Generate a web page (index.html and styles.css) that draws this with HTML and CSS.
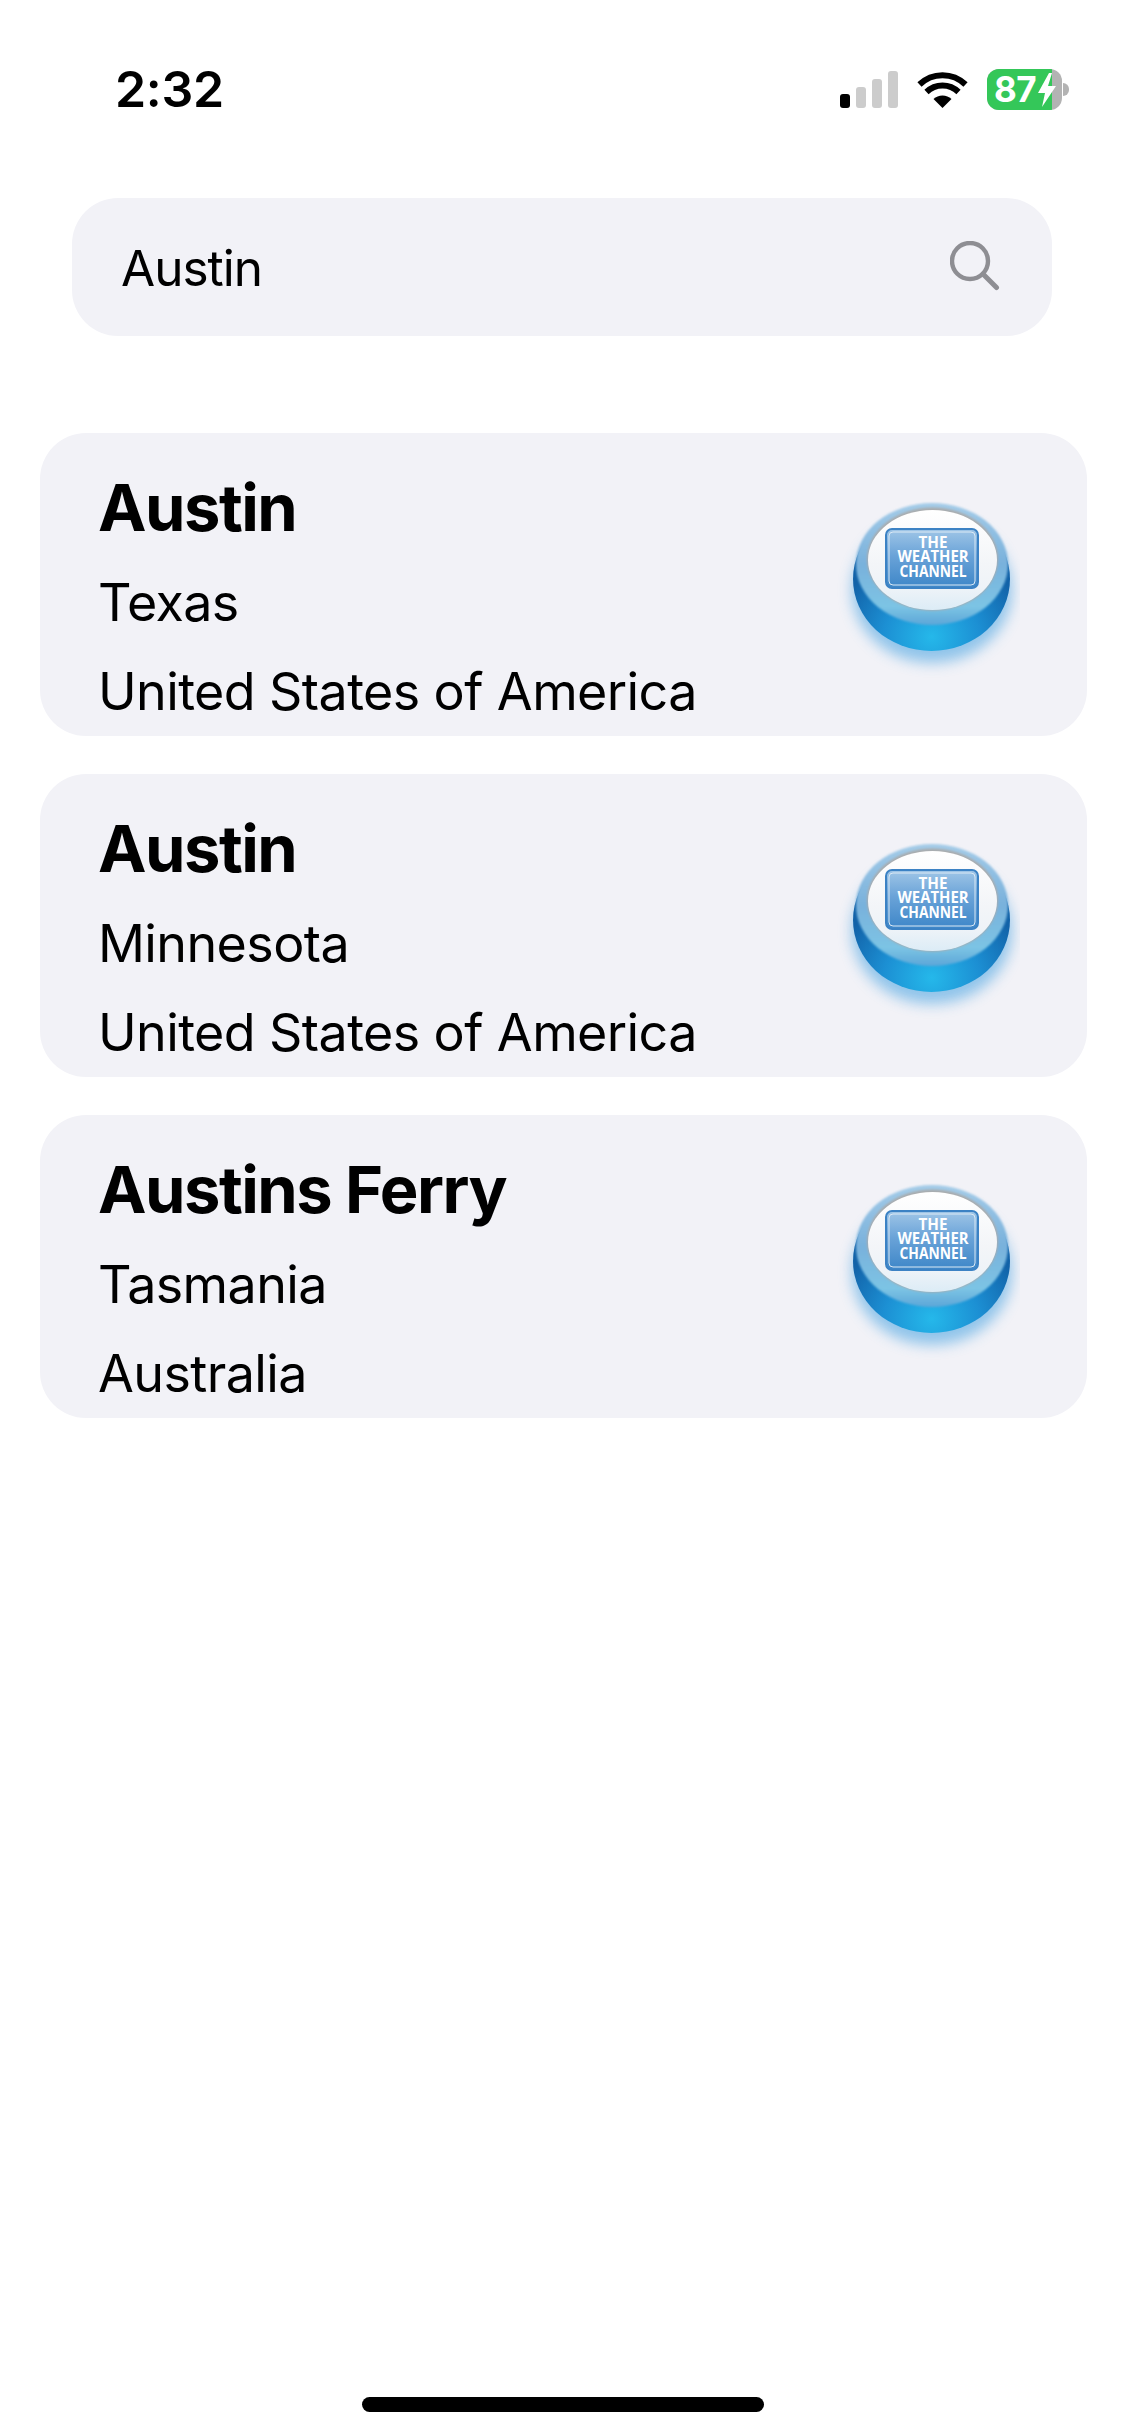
FILE: index.html
```html
<!DOCTYPE html>
<html lang="en">
<head>
<meta charset="utf-8">
<title>Search</title>
<link rel="stylesheet" href="styles.css">
</head>
<body>
<svg class="defs" width="0" height="0" aria-hidden="true">
  <defs>
    <radialGradient id="base" cx=".5" cy=".92" r=".62" fx=".5" fy=".9">
      <stop offset="0" stop-color="#25b8ea"/><stop offset=".5" stop-color="#1c8fd3"/><stop offset="1" stop-color="#1262a8"/>
    </radialGradient>
    <linearGradient id="ring" x1="0" y1="0" x2="0" y2="1">
      <stop offset="0" stop-color="#a5cce8"/><stop offset=".5" stop-color="#79b1dc"/><stop offset=".85" stop-color="#7cc4e4"/><stop offset="1" stop-color="#5ca6d8"/>
    </linearGradient>
    <linearGradient id="glass" x1="0" y1="0" x2="0" y2="1">
      <stop offset="0" stop-color="#ffffff"/><stop offset=".55" stop-color="#f3f5f8"/><stop offset=".78" stop-color="#eef3f8"/><stop offset="1" stop-color="#dcecf6"/>
    </linearGradient>
    <linearGradient id="plate" x1="0" y1="0" x2="0" y2="1">
      <stop offset="0" stop-color="#a0c6e7"/><stop offset=".45" stop-color="#6aa3d8"/><stop offset="1" stop-color="#3d86c8"/>
    </linearGradient>
    <filter id="glow" x="-25%" y="-25%" width="150%" height="150%"><feGaussianBlur stdDeviation="7"/></filter>
    <filter id="soft" x="-5%" y="-5%" width="110%" height="110%"><feGaussianBlur stdDeviation=".8"/></filter>
    <symbol id="twc" viewBox="0 0 200 200">
      <ellipse cx="112" cy="110" rx="80" ry="73" fill="#3f9fe0" opacity=".55" filter="url(#glow)"/>
      <ellipse cx="111.5" cy="99" rx="78.5" ry="72" fill="url(#base)"/>
      <ellipse cx="112" cy="84" rx="76" ry="61" fill="url(#ring)" filter="url(#soft)"/>
      <ellipse cx="112.5" cy="79" rx="65.5" ry="51.5" fill="#a9acae" filter="url(#soft)"/>
      <ellipse cx="112.5" cy="80" rx="64.5" ry="50" fill="url(#glass)"/>
      <rect x="66" y="49" width="92" height="59" rx="6" fill="url(#plate)" stroke="#3c82c4" stroke-width="2"/>
      <rect x="69" y="52" width="86" height="53" rx="4" fill="none" stroke="#dbe9f5" stroke-width="1"/>
      <text class="twc-text" x="113" y="67.5" text-anchor="middle" textLength="29" lengthAdjust="spacingAndGlyphs">THE</text>
      <text class="twc-text" x="113" y="82" text-anchor="middle" textLength="71" lengthAdjust="spacingAndGlyphs">WEATHER</text>
      <text class="twc-text" x="113" y="96.5" text-anchor="middle" textLength="67" lengthAdjust="spacingAndGlyphs">CHANNEL</text>
    </symbol>
  </defs>
</svg>
<main class="screen">
  <header class="status">
    <span class="time">2:32</span>
    <div class="status-icons">
      <div class="signal">
        <span class="bar bar1 on"></span><span class="bar bar2"></span><span class="bar bar3"></span><span class="bar bar4"></span>
      </div>
      <svg class="wifi" width="51" height="37" viewBox="0 0 51 37">
        <path d="M25.5 37 L16.5 28 A13 13 0 0 1 34.5 28 Z" fill="#000"/>
        <path d="M9.5 21 A23 23 0 0 1 41.5 21" fill="none" stroke="#000" stroke-width="6"/>
        <path d="M2.5 13.5 A33 33 0 0 1 48.5 13.5" fill="none" stroke="#000" stroke-width="6"/>
      </svg>
      <div class="battery">
        <div class="battery-body">
          <div class="battery-fill"></div>
          <span class="battery-num">87</span>
          <svg class="bolt" width="20" height="34" viewBox="0 0 20 34"><path d="M12 0 L1 20 H8 L5 34 L19 13 H11 L15 0 Z" fill="#fff"/></svg>
        </div>
        <span class="battery-nub"></span>
      </div>
    </div>
  </header>

  <div class="search">
    <span class="search-text">Austin</span>
    <svg class="search-icon" width="50" height="50" viewBox="0 0 50 50">
      <circle cx="20" cy="20" r="18" fill="none" stroke="#8e8e93" stroke-width="4.4"/>
      <path d="M33 33 L46.5 46.5" stroke="#8e8e93" stroke-width="5" stroke-linecap="round"/>
    </svg>
  </div>

  <section class="results">
    <article class="card">
      <div class="card-text">
        <h2 class="city">Austin</h2>
        <p class="line">Texas</p>
        <p class="line">United States of America</p>
      </div>
      <svg class="logo" width="200" height="200"><use href="#twc"/></svg>
    </article>
    <article class="card">
      <div class="card-text">
        <h2 class="city">Austin</h2>
        <p class="line">Minnesota</p>
        <p class="line">United States of America</p>
      </div>
      <svg class="logo" width="200" height="200"><use href="#twc"/></svg>
    </article>
    <article class="card">
      <div class="card-text">
        <h2 class="city">Austins Ferry</h2>
        <p class="line">Tasmania</p>
        <p class="line">Australia</p>
      </div>
      <svg class="logo" width="200" height="200"><use href="#twc"/></svg>
    </article>
  </section>

  <div class="home-bar"></div>
</main>
</body>
</html>
```
FILE: styles.css
```css
* { box-sizing: border-box; }
html, body { margin: 0; padding: 0; background: #fff; }
body { font-family: Inter, "Liberation Sans", sans-serif; color: #000; }
.defs { position: absolute; }
.screen { width: 1125px; height: 2436px; display: flex; flex-direction: column; }

.status { height: 198px; padding: 58px 56px 0 115px; display: flex; justify-content: space-between; align-items: flex-start; }
.time { font-size: 50px; font-weight: 600; line-height: 62px; letter-spacing: -.3px; }
.status-icons { display: flex; align-items: center; gap: 19px; height: 62px; padding-top: 1px; }
.signal { display: flex; align-items: flex-end; gap: 6px; height: 37px; }
.bar { width: 10px; background: #cccccc; border-radius: 3px; }
.bar.on { background: #000; }
.bar1 { height: 14px; }
.bar2 { height: 21px; }
.bar3 { height: 29px; }
.bar4 { height: 37px; }
.wifi { display: block; }
.battery { display: flex; align-items: center; gap: 1px; }
.battery-body { position: relative; width: 75px; height: 41px; border-radius: 12px; background: #b3b3b3; overflow: hidden; display: flex; align-items: center; padding-left: 7px; }
.battery-fill { position: absolute; left: 0; top: 0; bottom: 0; width: 65px; background: #34c759; }
.battery-num { position: relative; font-size: 35px; font-weight: 700; line-height: 41px; color: #fff; letter-spacing: -.5px; }
.bolt { position: relative; margin-left: 1px; }
.battery-nub { width: 6px; height: 13px; background: #b3b3b3; border-radius: 0 7px 7px 0; }

.search { margin: 0 73px 0 72px; height: 138px; background: #f2f2f7; border-radius: 46px; display: flex; align-items: center; justify-content: space-between; padding: 0 52px 0 49px; }
.search-text { font-size: 49.5px; line-height: 60px; letter-spacing: -1px; margin-top: 2px; }
.search-icon { display: block; margin-bottom: 2px; }

.results { margin: 97px 38px 0 40px; display: flex; flex-direction: column; gap: 38px; flex: 1; }
.card { height: 303px; background: #f2f2f7; border-radius: 46px; display: flex; justify-content: space-between; align-items: flex-start; padding: 37px 67px 0 58px; overflow: hidden; }
.city { margin: 0 0 27px; font-size: 65px; font-weight: 700; line-height: 76px; letter-spacing: -1.5px; }
.line { margin: 0 0 29px; font-size: 52px; line-height: 60px; letter-spacing: -.6px; white-space: nowrap; }
.logo { display: block; margin-top: 10px; }
.twc-text { font-family: "Liberation Sans Narrow", "Open Sans", "Liberation Sans", sans-serif; font-size: 15.5px; font-weight: 700; fill: #fff; }

.home-bar { width: 402px; height: 15px; border-radius: 8px; background: #000; margin: 0 auto 24px; }
```
